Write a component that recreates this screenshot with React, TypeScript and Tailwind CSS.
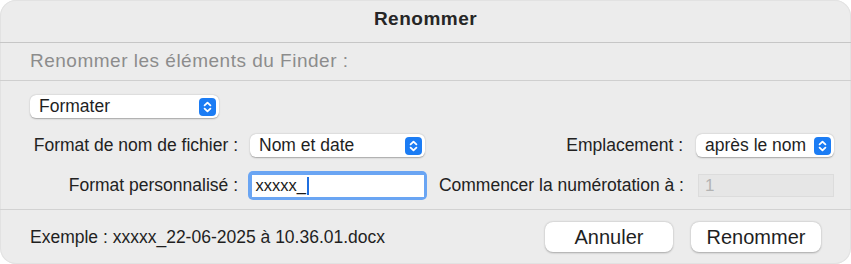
import React from "react";

const font = { fontFamily: '"Liberation Sans", Arial, sans-serif' };

function Chevrons() {
  return (
    <svg width="17" height="18" viewBox="0 0 17 18" className="shrink-0">
      <rect x="0" y="0" width="17" height="18" rx="4" fill="#1b7cf4" />
      <path d="M5.6 7.4 L8.5 4.6 L11.4 7.4" fill="none" stroke="#fff" strokeWidth="1.8" strokeLinecap="round" strokeLinejoin="round" />
      <path d="M5.6 10.6 L8.5 13.4 L11.4 10.6" fill="none" stroke="#fff" strokeWidth="1.8" strokeLinecap="round" strokeLinejoin="round" />
    </svg>
  );
}

function Popup({ label, w }: { label: string; w: string }) {
  return (
    <div
      className={`${w} h-[23px] flex items-center justify-between pl-[9px] pr-[3px] bg-white rounded-[6px] shadow-[0_0.5px_1.5px_rgba(0,0,0,0.3)] text-[17.5px] text-[#1f1f1f]`}
    >
      <span className="whitespace-nowrap">{label}</span>
      <Chevrons />
    </div>
  );
}

export default function App() {
  return (
    <div className="w-[851px] h-[264px] bg-white" style={font}>
      <div className="w-[851px] h-[264px] bg-[#ececec] rounded-[16px] overflow-hidden flex flex-col shadow-[inset_0_0_0_1px_#e2e2e2]">
        <div className="h-[43px] shrink-0 flex items-center justify-center border-b border-[#c6c6c6]">
          <span className="text-[19px] font-bold tracking-[0.5px] text-[#262626] pb-[3px]">Renommer</span>
        </div>
        <div className="h-[38px] shrink-0 flex items-center pl-[30px] border-b border-[#cfcfcf]">
          <span className="text-[19px] tracking-[0.5px] text-[#8c8c8c]">Renommer les éléments du Finder :</span>
        </div>
        <div className="h-[129px] shrink-0 flex flex-col pl-[30px] pr-[17px] pt-[14px] border-b border-[#d2d2d2]">
          <Popup label="Formater" w="w-[189px]" />
          <div className="mt-[16px] flex items-center h-[23px]">
            <div className="w-[208px] shrink-0 text-right text-[17.5px] text-[#222] whitespace-nowrap">Format de nom de fichier :</div>
            <div className="ml-[12px]">
              <Popup label="Nom et date" w="w-[175px]" />
            </div>
            <div className="flex-1 text-right text-[17.5px] text-[#222] whitespace-nowrap">Emplacement :</div>
            <div className="ml-[13px]">
              <Popup label="après le nom" w="w-[138px]" />
            </div>
          </div>
          <div className="mt-[14px] flex items-center h-[29px]">
            <div className="w-[208px] shrink-0 text-right text-[17.5px] text-[#222] whitespace-nowrap">Format personnalisé :</div>
            <div className="ml-[10px] w-[179px] h-[29px] rounded-[5px] bg-[#6aa5f3] p-[3.5px]">
              <div className="w-full h-full bg-white flex items-center pl-[4px] text-[16.5px] text-[#1a1a1a]">
                <span>xxxxx_</span>
                <span className="w-[2px] h-[18px] bg-[#1f6fe0] ml-[1px]" />
              </div>
            </div>
            <div className="flex-1 text-right text-[17.5px] text-[#222] whitespace-nowrap">Commencer la numérotation à :</div>
            <div className="ml-[14px] w-[136px] h-[23px] bg-[#e6e6e6] border border-[#dcdcdc] flex items-center pl-[6px] text-[17px] text-[#b3b3b3]">
              1
            </div>
          </div>
        </div>
        <div className="flex-1 flex items-center pl-[30px] pr-[30px]">
          <span className="text-[17.5px] text-[#1f1f1f] whitespace-nowrap">Exemple : xxxxx_22-06-2025 à 10.36.01.docx</span>
          <div className="ml-auto flex gap-[18px]">
            <div className="w-[128px] h-[30px] bg-white rounded-[8px] shadow-[0_0.5px_2px_rgba(0,0,0,0.3)] flex items-center justify-center text-[20px] text-[#1f1f1f]">
              Annuler
            </div>
            <div className="w-[130px] h-[30px] bg-white rounded-[8px] shadow-[0_0.5px_2px_rgba(0,0,0,0.3)] flex items-center justify-center text-[20px] text-[#1f1f1f]">
              Renommer
            </div>
          </div>
        </div>
      </div>
    </div>
  );
}
